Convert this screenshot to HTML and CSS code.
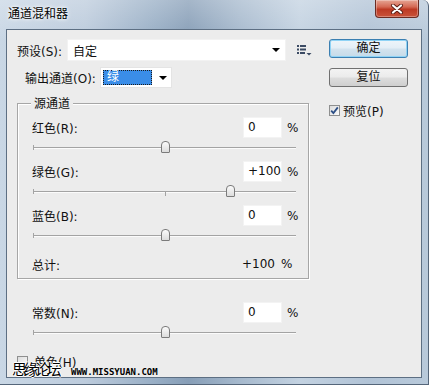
FILE: index.html
```html
<!DOCTYPE html>
<html lang="zh-CN">
<head>
    <meta charset="UTF-8">
    <meta name="viewport" content="width=device-width, initial-scale=1.0">
    <title>通道混和器</title>
    <link rel="stylesheet" href="styles.css">
</head>
<body>
<div class="window">
    <div class="titlebar">
        <span class="title">通道混和器</span>
        <button class="close-btn">
            <svg width="14" height="10" viewBox="0 0 14 10">
                <path d="M3 1.5 L11 8.5 M11 1.5 L3 8.5" stroke="#5a1d15" stroke-width="4" stroke-linecap="round"/>
                <path d="M3 1.5 L11 8.5 M11 1.5 L3 8.5" stroke="#fff" stroke-width="2.2" stroke-linecap="round"/>
            </svg>
        </button>
    </div>

    <div class="client">
        <div class="main">
            <div class="preset-row">
                <span class="preset-label">预设(S):</span>
                <div class="preset-box">
                    <span>自定</span>
                    <span class="arrow"></span>
                </div>
                <svg class="list-icon" width="15" height="11" viewBox="0 0 15 11">
                    <rect x="0" y="0" width="2" height="2" fill="#3b4a63"/>
                    <rect x="3" y="0" width="6" height="2" fill="#3b4a63"/>
                    <rect x="0" y="3.5" width="2" height="2" fill="#3b4a63"/>
                    <rect x="3" y="3.5" width="6" height="2" fill="#3b4a63"/>
                    <rect x="0" y="7" width="2" height="2" fill="#3b4a63"/>
                    <rect x="3" y="7" width="5" height="2" fill="#3b4a63"/>
                    <path d="M9.5 8 H14.5 L12 10.5 Z" fill="#3b4a63"/>
                </svg>
            </div>

            <div class="output-row">
                <span class="output-label">输出通道(O):</span>
                <div class="output-select">
                    <span class="selected">绿</span>
                    <span class="arrow"></span>
                </div>
            </div>

            <div class="group">
                <span class="legend">源通道</span>

                <div class="channel">
                    <div class="value-row">
                        <span class="label">红色(R):</span>
                        <span class="num">0</span>
                        <span class="pct">%</span>
                    </div>
                    <div class="slider"><span class="tick"></span><span class="thumb" style="left: 50%"></span></div>
                </div>

                <div class="channel">
                    <div class="value-row">
                        <span class="label">绿色(G):</span>
                        <span class="num">+100</span>
                        <span class="pct">%</span>
                    </div>
                    <div class="slider"><span class="tick"></span><span class="thumb" style="left: 75%"></span></div>
                </div>

                <div class="channel">
                    <div class="value-row">
                        <span class="label">蓝色(B):</span>
                        <span class="num">0</span>
                        <span class="pct">%</span>
                    </div>
                    <div class="slider"><span class="tick"></span><span class="thumb" style="left: 50%"></span></div>
                </div>

                <div class="total-row">
                    <span class="label">总计:</span>
                    <span class="total-val">+100</span>
                    <span class="pct">%</span>
                </div>
            </div>

            <div class="constant">
                <div class="value-row">
                    <span class="label">常数(N):</span>
                    <span class="num">0</span>
                    <span class="pct">%</span>
                </div>
                <div class="slider"><span class="tick"></span><span class="thumb" style="left: 50%"></span></div>
            </div>

            <div class="mono-row">
                <span class="checkbox"></span>
                <span>单色(H)</span>
            </div>
        </div>

        <div class="side">
            <button class="btn default">确定</button>
            <button class="btn">复位</button>
            <div class="preview">
                <span class="checkbox">
                    <svg width="9" height="9" viewBox="0 0 9 9">
                        <path d="M1.2 4.6 L3.4 7 L7.8 1.4" fill="none" stroke="#2d4f86" stroke-width="1.8"/>
                    </svg>
                </span>
                <span>预览(P)</span>
            </div>
        </div>
    </div>

    <div class="watermark">
        <span class="wm-cn">思缘论坛</span>
        <span class="wm-url">www.missyuan.com</span>
    </div>
</div>
</body>
</html>
```

FILE: styles.css
```css
body {
    margin: 0;
    font-family: "DejaVu Sans", "Noto Sans CJK SC", sans-serif;
    font-size: 12px;
    color: #111;
    overflow: hidden;
}
.window {
    position: relative;
    width: 429px;
    height: 385px;
    box-sizing: border-box;
    padding: 0 6px 6px 6px;
    display: flex;
    flex-direction: column;
    border-right: 1px solid #55667a;
    border-bottom: 1px solid #55667a;
    border-radius: 0 6px 0 0;
    background:
        linear-gradient(180deg, rgba(255,255,255,0.25), rgba(255,255,255,0) 40px),
        linear-gradient(90deg, #c9d7e5 0%, #bccbdc 20%, #98aec5 36%, #879eb7 44%, #a6b9cd 56%, #c3d2e1 70%, #b1c3d6 86%, #b8c9da 100%);
}
.titlebar {
    height: 29px;
    display: flex;
    align-items: flex-start;
}
.title {
    margin: 6px 0 0 2px;
    font-size: 12px;
    line-height: 16px;
    color: #000;
    text-shadow: 0 0 5px #fff, 0 0 3px #fff;
}
.close-btn {
    margin-left: auto;
    margin-right: 3px;
    width: 44px;
    height: 18px;
    padding: 0;
    display: flex;
    align-items: center;
    justify-content: center;
    border: 1px solid #6b2b22;
    border-top: none;
    border-radius: 0 0 4px 4px;
    background: linear-gradient(180deg, #e6a594 0%, #d56a55 40%, #bd3a24 55%, #c9533a 100%);
    box-shadow: inset 0 0 0 1px rgba(255,255,255,0.3);
}
.client {
    flex: 1;
    display: flex;
    padding: 9px 0 0 10px;
    background: #ececec;
    border: 1px solid #5d6f83;
}
.main {
    width: 295px;
}
.preset-row {
    display: flex;
    align-items: center;
    height: 22px;
}
.preset-label {
    width: 50px;
}
.preset-box {
    width: 219px;
    height: 22px;
    box-sizing: border-box;
    display: flex;
    align-items: center;
    justify-content: space-between;
    padding: 0 5px 0 5px;
    background: #fff;
    border: 1px solid #f2f2f2;
}
.arrow {
    width: 0;
    height: 0;
    border-top: 4px solid #000;
    border-left: 4px solid transparent;
    border-right: 4px solid transparent;
}
.list-icon {
    margin-left: 11px;
}
.output-row {
    display: flex;
    align-items: center;
    height: 21px;
    margin-top: 6px;
    padding-left: 8px;
}
.output-label {
    width: 75px;
}
.output-select {
    width: 72px;
    height: 21px;
    box-sizing: border-box;
    display: flex;
    align-items: center;
    justify-content: space-between;
    padding: 0 4px 0 2px;
    background: #fff;
    border: 1px solid #e4e4e4;
}
.selected {
    width: 49px;
    height: 15px;
    box-sizing: border-box;
    padding-left: 3px;
    line-height: 13px;
    color: #fff;
    background: #3a8de8;
    border: 1px dotted #1a1a1a;
}
.group {
    position: relative;
    width: 292px;
    box-sizing: border-box;
    margin-top: 15px;
    padding: 13px 10px 7px 14px;
    border: 1px solid #a6a6a6;
    box-shadow: inset 1px 1px 0 #fff, 1px 1px 0 #fff;
}
.legend {
    position: absolute;
    top: -8px;
    left: 13px;
    padding: 0 3px;
    line-height: 16px;
    background: #ececec;
}
.value-row {
    display: flex;
    align-items: center;
    height: 21px;
}
.value-row .label {
    flex: 1;
}
.num {
    width: 39px;
    height: 21px;
    box-sizing: border-box;
    padding-left: 4px;
    line-height: 19px;
    background: #fff;
    border: 1px solid #f3f3f3;
}
.pct {
    width: 11px;
    margin-left: 5px;
}
.slider {
    position: relative;
    height: 12px;
    margin: 3px 2px 8px 1px;
}
.slider::before {
    content: "";
    position: absolute;
    left: 0;
    right: 0;
    top: 6px;
    height: 1px;
    background: #a3a3a3;
    border-bottom: 1px solid #fbfbfb;
}
.slider::after {
    content: "";
    position: absolute;
    left: 0;
    top: 4px;
    width: 1px;
    height: 5px;
    background: #a3a3a3;
}
.tick {
    position: absolute;
    left: 50%;
    top: 7px;
    width: 1px;
    height: 4px;
    background: #a3a3a3;
}
.thumb {
    position: absolute;
    top: 0;
    width: 9px;
    height: 12px;
    margin-left: -4px;
    box-sizing: border-box;
    border: 1px solid #7b7b7b;
    border-radius: 4px 4px 1px 1px;
    background: linear-gradient(180deg, #fbfbfb, #dcdcdc);
}
.total-row {
    display: flex;
    align-items: center;
    height: 14px;
    margin-top: 16px;
    padding-right: 6px;
}
.total-row .label {
    flex: 1;
}
.total-row .pct {
    margin-left: 6px;
}
.constant {
    width: 292px;
    box-sizing: border-box;
    margin-top: 23px;
    padding: 0 11px 0 15px;
}
.constant .slider {
    margin-bottom: 0;
}
.mono-row {
    display: flex;
    align-items: center;
    gap: 6px;
    height: 12px;
    margin-top: 17px;
}
.checkbox {
    width: 11px;
    height: 11px;
    box-sizing: border-box;
    display: flex;
    align-items: center;
    justify-content: center;
    border: 1px solid #8e8f8f;
    background: linear-gradient(135deg, #dcdcdc, #fbfbfb);
}
.side {
    width: 79px;
    margin-left: 17px;
    display: flex;
    flex-direction: column;
}
.btn {
    height: 19px;
    padding: 0;
    font-family: inherit;
    font-size: 12px;
    line-height: 17px;
    color: #111;
    border: 1px solid #707070;
    border-radius: 3px;
    background: linear-gradient(180deg, #f3f3f3 0%, #ebebeb 48%, #dddddd 52%, #cfcfcf 100%);
}
.btn + .btn {
    margin-top: 10px;
}
.btn.default {
    border-color: #3c7fb1;
    box-shadow: inset 0 0 0 1px #8fd3f5;
    background: linear-gradient(180deg, #eef5fa 0%, #e3eef6 48%, #d3e3ee 52%, #c6dbe9 100%);
}
.preview {
    display: flex;
    align-items: center;
    gap: 3px;
    height: 13px;
    margin-top: 17px;
}
.watermark {
    position: absolute;
    left: 12px;
    top: 360px;
    display: flex;
    align-items: baseline;
}
.wm-cn {
    font-family: "Noto Sans CJK SC", sans-serif;
    font-size: 15px;
    letter-spacing: -3.5px;
    line-height: 18px;
    color: #000;
    text-shadow: 1px 0 #fff, -1px 0 #fff, 0 1px #fff, 0 -1px #fff;
}
.wm-url {
    margin-left: 13px;
    font-family: "DejaVu Sans Mono", monospace;
    font-size: 9px;
    font-weight: bold;
    text-transform: uppercase;
    color: #000;
}
```
